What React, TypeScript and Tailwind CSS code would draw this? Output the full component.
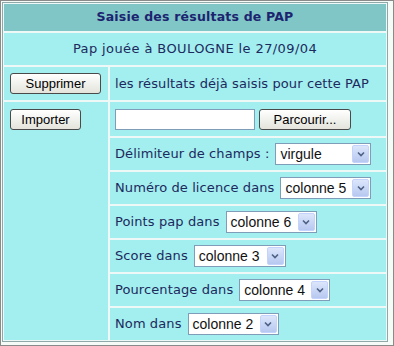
import React from 'react'

const Select = ({ value, width }: { value: string; width: string }) => (
  <div
    className={`${width} h-[22px] flex items-stretch bg-white border border-[#7f9db9] font-['Liberation_Sans',Arial,sans-serif] text-[14px] text-[#111] tracking-normal`}
  >
    <span className="flex-1 pl-[4px] leading-[20px]">{value}</span>
    <span className="w-[17px] m-[1px] rounded-[2px] bg-gradient-to-b from-[#dce6fb] to-[#b7c8f0] border border-[#c3d3fd] flex items-center justify-center">
      <svg width="8" height="6" viewBox="0 0 8 6">
        <path d="M1 1.5 L4 4.5 L7 1.5" fill="none" stroke="#4d6185" strokeWidth="1.6" />
      </svg>
    </span>
  </div>
)

const Button = ({ label, className }: { label: string; className: string }) => (
  <div
    className={`${className} h-[21px] flex items-center justify-center rounded-[3px] border border-[#4a4a4a] bg-gradient-to-b from-white to-[#e4e4dc] font-['Liberation_Sans',Arial,sans-serif] text-[13px] text-black tracking-normal`}
  >
    {label}
  </div>
)

const Row = ({ label, value, width }: { label: string; value: string; width: string }) => (
  <div className="h-[32px] bg-[#a3eeee] flex items-center gap-[6px] pl-[5px]">
    <span>{label}</span>
    <Select value={value} width={width} />
  </div>
)

const App = () => {
  return (
    <div className="w-[394px] h-[346px] bg-[#f5fbf7] border border-[#8a8a8a] overflow-hidden font-['DejaVu_Sans',Verdana,sans-serif] text-[13px] tracking-[0.1px] text-[#1c2a5e]">
      <div className="ml-[1px] mt-[1px] w-[386px] border border-[#8fa8a8] bg-[#eef8f6] p-[1px] flex flex-col gap-[2px]">
        <div className="h-[27px] bg-[#80c6c6] flex items-center justify-center font-bold text-[12.5px] tracking-[0.2px] text-[#1c2470]">
          Saisie des résultats de PAP
        </div>
        <div className="h-[32px] bg-[#a3eeee] flex items-center justify-center tracking-[0.4px]">
          Pap jouée à BOULOGNE le 27/09/04
        </div>
        <div className="flex gap-[2px]">
          <div className="w-[104px] h-[33px] bg-[#a3eeee] flex items-center pl-[6px]">
            <Button label="Supprimer" className="w-[91px]" />
          </div>
          <div className="flex-1 bg-[#a3eeee] flex items-center pl-[5px]">
            les résultats déjà saisis pour cette PAP
          </div>
        </div>
        <div className="flex gap-[2px]">
          <div className="w-[104px] bg-[#a3eeee] pl-[6px] pt-[7px]">
            <Button label="Importer" className="w-[71px]" />
          </div>
          <div className="flex-1 flex flex-col gap-[2px]">
            <div className="h-[34px] bg-[#a3eeee] flex items-start gap-[4px] pl-[5px] pt-[7px]">
              <div className="w-[140px] h-[21px] bg-white border border-[#7f9db9]" />
              <Button label="Parcourir..." className="w-[92px]" />
            </div>
            <Row label="Délimiteur de champs :" value="virgule" width="w-[96px]" />
            <Row label="Numéro de licence dans" value="colonne 5" width="w-[91px]" />
            <Row label="Points pap dans" value="colonne 6" width="w-[91px]" />
            <Row label="Score dans" value="colonne 3" width="w-[92px]" />
            <Row label="Pourcentage dans" value="colonne 4" width="w-[91px]" />
            <Row label="Nom dans" value="colonne 2" width="w-[91px]" />
          </div>
        </div>
      </div>
    </div>
  )
}

export default App
